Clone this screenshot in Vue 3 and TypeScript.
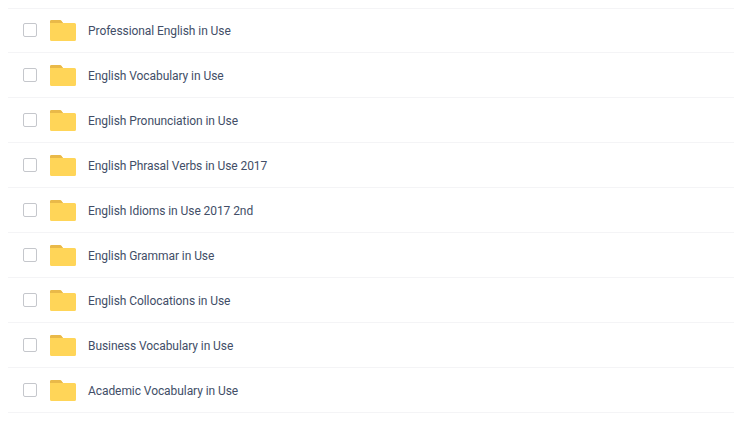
<script setup lang="ts">
const folders: string[] = [
  'Professional English in Use',
  'English Vocabulary in Use',
  'English Pronunciation in Use',
  'English Phrasal Verbs in Use 2017',
  'English Idioms in Use 2017 2nd',
  'English Grammar in Use',
  'English Collocations in Use',
  'Business Vocabulary in Use',
  'Academic Vocabulary in Use',
]
</script>

<template>
  <div class="page">
    <ul class="list">
      <li v-for="name in folders" :key="name" class="row">
        <span class="check"></span>
        <svg class="folder" width="26" height="22" viewBox="0 0 26 22">
          <path d="M0 2.500a1.500 1.500 0 0 1 1.500-1.500h8.200c.7 0 1.200.3 1.600.8L13 4h11.500A1.500 1.500 0 0 1 26 5.500V20.500a1.500 1.500 0 0 1-1.500 1.500h-23A1.500 1.500 0 0 1 0 20.500z" fill="#ffd558"/>
          <path d="M0 2.500a1.500 1.500 0 0 1 1.500-1.500h8.200c.7 0 1.200.3 1.600.8L13 4H0z" fill="#e9b949"/>
        </svg>
        <span class="name">{{ name }}</span>
      </li>
    </ul>
  </div>
</template>

<style scoped>
.page {
  width: 734px;
  height: 432px;
  box-sizing: border-box;
  padding: 8px 0 0 8px;
  background: #fff;
  overflow: hidden;
}
.list {
  margin: 0;
  padding: 0;
  list-style: none;
}
.row {
  display: flex;
  align-items: center;
  height: 45px;
  box-sizing: border-box;
  padding-left: 15px;
  border-bottom: 1px solid #f4f4f6;
}
.row:first-child {
  box-shadow: inset 0 1px 0 #f4f4f6;
}
.check {
  width: 14px;
  height: 14px;
  border: 1px solid #c5c7cc;
  border-radius: 2px;
  box-sizing: border-box;
  background: #fff;
}
.folder {
  margin-left: 13px;
  flex: none;
}
.name {
  margin-left: 12px;
  padding-top: 2px;
  font: 12px/16px Roboto, "Liberation Sans", sans-serif;
  letter-spacing: -0.07px;
  color: #424e67;
}
</style>
